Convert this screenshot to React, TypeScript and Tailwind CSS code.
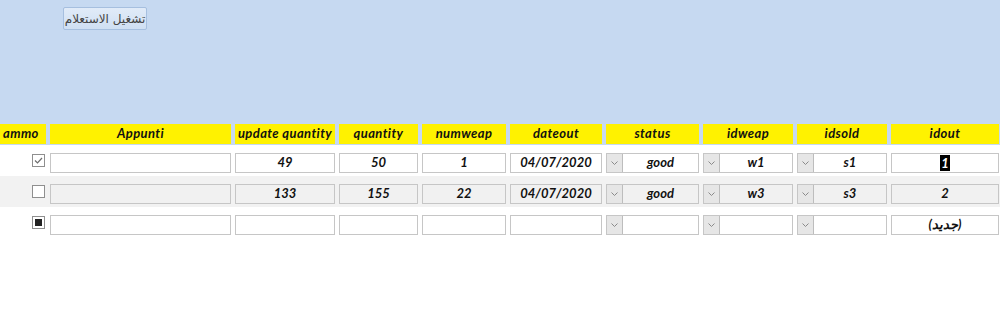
import React from 'react';

type Cell = { kind: 'text' | 'combo'; value?: string; selected?: boolean };

const columns = [
    { name: 'ammo', w: 'w-[46px]' },
    { name: 'Appunti', w: 'w-[181px]' },
    { name: 'update quantity', w: 'w-[100px]' },
    { name: 'quantity', w: 'w-[79px]' },
    { name: 'numweap', w: 'w-[84px]' },
    { name: 'dateout', w: 'w-[92px]' },
    { name: 'status', w: 'w-[93px]' },
    { name: 'idweap', w: 'w-[90px]' },
    { name: 'idsold', w: 'w-[90px]' },
    { name: 'idout', w: 'w-[108px]' },
];

const rows: { check: 'checked' | 'empty' | 'mixed'; cells: Cell[] }[] = [
    {
        check: 'checked',
        cells: [
            { kind: 'text', value: '' },
            { kind: 'text', value: '49' },
            { kind: 'text', value: '50' },
            { kind: 'text', value: '1' },
            { kind: 'text', value: '04/07/2020' },
            { kind: 'combo', value: 'good' },
            { kind: 'combo', value: 'w1' },
            { kind: 'combo', value: 's1' },
            { kind: 'text', value: '1', selected: true },
        ],
    },
    {
        check: 'empty',
        cells: [
            { kind: 'text', value: '' },
            { kind: 'text', value: '133' },
            { kind: 'text', value: '155' },
            { kind: 'text', value: '22' },
            { kind: 'text', value: '04/07/2020' },
            { kind: 'combo', value: 'good' },
            { kind: 'combo', value: 'w3' },
            { kind: 'combo', value: 's3' },
            { kind: 'text', value: '2' },
        ],
    },
    {
        check: 'mixed',
        cells: [
            { kind: 'text', value: '' },
            { kind: 'text', value: '' },
            { kind: 'text', value: '' },
            { kind: 'text', value: '' },
            { kind: 'text', value: '' },
            { kind: 'combo', value: '' },
            { kind: 'combo', value: '' },
            { kind: 'combo', value: '' },
            { kind: 'text', value: '(جديد)' },
        ],
    },
];

const CheckBox = ({ state }: { state: 'checked' | 'empty' | 'mixed' }) => (
    <div className="w-[13px] h-[13px] border border-[#8f8f8f] bg-white flex items-center justify-center">
        {state === 'checked' && (
            <svg width="9" height="9" viewBox="0 0 9 9">
                <path d="M1 4.5 L3.5 7 L8 2" stroke="#6e6e6e" strokeWidth="1.2" fill="none" />
            </svg>
        )}
        {state === 'mixed' && <div className="w-[7px] h-[7px] bg-[#222]" />}
    </div>
);

const Field = ({ cell, w, grey }: { cell: Cell; w: string; grey: boolean }) => {
    const box = `${w} h-[20px] border border-[#c6c6c6] flex items-center ${grey ? 'bg-[#f1f1f1]' : 'bg-white'}`;
    if (cell.kind === 'combo') {
        return (
            <div className={box}>
                <div className="w-[16px] h-full bg-[#e6e6e6] border-r border-[#bdbdbd] flex items-center justify-center">
                    <svg width="7" height="4" viewBox="0 0 7 4">
                        <path d="M0.5 0.5 L3.5 3.5 L6.5 0.5" stroke="#8a8a8a" strokeWidth="1" fill="none" />
                    </svg>
                </div>
                <div className="flex-1 text-center">{cell.value}</div>
            </div>
        );
    }
    return (
        <div className={`${box} justify-center`}>
            {cell.selected ? <span className="bg-black text-white px-[1px] leading-[16px]">{cell.value}</span> : cell.value}
        </div>
    );
};

const App = () => (
    <div className="w-[1000px] h-[313px] bg-white overflow-hidden font-['Lato','Open_Sans',sans-serif] text-[13px] text-[#111]">
        {/* form header */}
        <div className="h-[145px] bg-[#c6d9f1] flex flex-col">
            <div className="pt-[7px] pl-[63px]">
                <button className="w-[84px] h-[23px] border border-[#a6bfdf] rounded-[2px] bg-gradient-to-b from-[#e1ebf8] to-[#cfdff3] text-[#444] text-[12px] font-['DejaVu_Sans','Noto_Sans',sans-serif]" dir="rtl">
                    تشغيل الاستعلام
                </button>
            </div>
            <div className="mt-[94px] flex gap-[4px] font-bold italic tracking-[0.4px]">
                {columns.map((c) => (
                    <div key={c.name} className={`${c.w} h-[20px] bg-[#fff200] flex items-center ${c.name === 'ammo' ? 'justify-start pl-[3px]' : 'justify-center'}`}>
                        {c.name}
                    </div>
                ))}
            </div>
        </div>

        {/* detail rows */}
        {rows.map((r, i) => (
            <div key={i} className={`h-[31px] pt-[8px] flex gap-[4px] font-bold italic ${i === 1 ? 'bg-[#f2f2f2]' : 'bg-white'}`}>
                <div className="w-[46px] flex justify-end pr-[1px] pt-[1px]">
                    <CheckBox state={r.check} />
                </div>
                {r.cells.map((cell, j) => (
                    <Field key={j} cell={cell} w={columns[j + 1].w} grey={i === 1} />
                ))}
            </div>
        ))}
    </div>
);

export default App;
